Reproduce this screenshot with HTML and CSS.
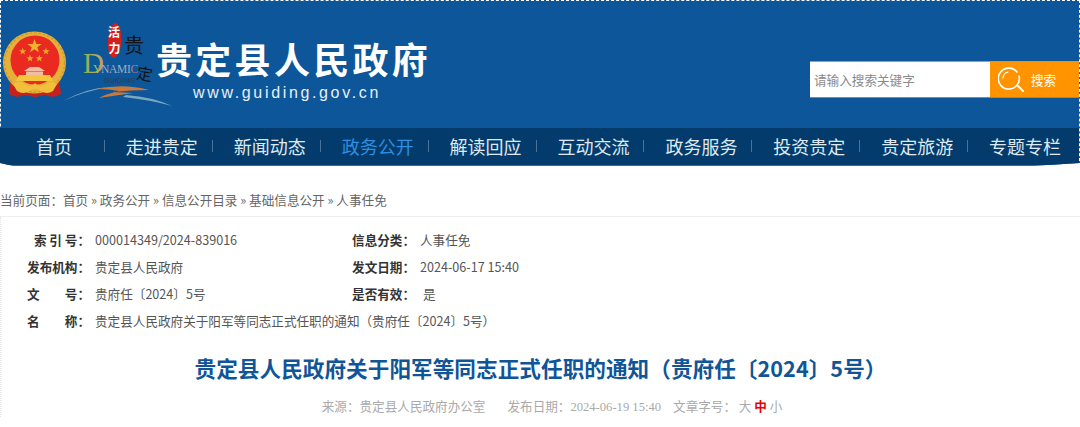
FILE: index.html
```html
<!DOCTYPE html>
<html lang="zh">
<head>
<meta charset="utf-8">
<title>贵定县人民政府</title>
<link rel="stylesheet" href="styles.css">
</head>
<body>
<header class="banner">
  <div class="top">
    <svg class="emblem" viewBox="0 0 64 68" width="64" height="68">
      <path d="M8 47 L6 63 Q13 68 22 64 L32 66 L42 64 Q51 68 58 63 L56 47 Z" fill="#c8201c"/>
      <ellipse cx="31.5" cy="31.5" rx="31.5" ry="31" fill="#e6b13a"/>
      <ellipse cx="31.5" cy="31.5" rx="30" ry="29.5" fill="none" stroke="#cd9a2a" stroke-width="1.4" stroke-dasharray="2.5 2"/>
      <circle cx="32" cy="29" r="24.5" fill="#ea2a20"/>
      <polygon points="31.5,8 33.3,13 38.6,13 34.3,16.2 35.9,21.3 31.5,18.2 27.1,21.3 28.7,16.2 24.4,13 29.7,13" fill="#f2b230"/>
      <polygon points="19.7,16.6 20.6,19.2 23.4,19.2 21.2,20.9 22,23.6 19.7,22 17.4,23.6 18.2,20.9 16,19.2 18.8,19.2" fill="#e8a62c"/>
      <polygon points="43,16.6 43.9,19.2 46.7,19.2 44.5,20.9 45.3,23.6 43,22 40.7,23.6 41.5,20.9 39.3,19.2 42.1,19.2" fill="#e8a62c"/>
      <polygon points="27,23.6 27.9,26.2 30.7,26.2 28.5,27.9 29.3,30.6 27,29 24.7,30.6 25.5,27.9 23.3,26.2 26.1,26.2" fill="#e8a62c"/>
      <polygon points="36.3,23.6 37.2,26.2 40,26.2 37.8,27.9 38.6,30.6 36.3,29 34,30.6 34.8,27.9 32.6,26.2 35.4,26.2" fill="#e8a62c"/>
      <path d="M27 36 H36 L42 40 H21 Z M23 40.5 H40 V44 H23 Z" fill="#f2bda0"/>
      <path d="M16 44 H47 L50 50 H13 Z" fill="#f3c63e"/>
      <path d="M10 53 Q16 49 22 53 Q27 58 32 52 Q37 58 42 53 Q48 49 54 53 L50 60 Q44 64 38 60 Q32 56 26 60 Q20 64 14 60 Z" fill="#f0c03a"/>
    </svg>
    <svg class="slogan" viewBox="0 0 112 90" width="112" height="90">
      <defs>
        <linearGradient id="dGrad" x1="0" x2="1" y1="0" y2="0">
          <stop offset="0" stop-color="#86ad62"/>
          <stop offset=".55" stop-color="#a8b25a"/>
          <stop offset="1" stop-color="#c99a5a"/>
        </linearGradient>
      </defs>
      <path d="M53 3 Q59 3 60 14 Q62 30 54 38 Q48 38 47 28 Q46 10 53 3 Z" fill="#d3201f"/>
      <text class="sl-red" x="47" y="17">活</text>
      <text class="sl-red" x="47.5" y="33">力</text>
      <text class="sl-ink" x="63" y="33">贵</text>
      <text class="sl-ink sl-small" x="76" y="60" transform="rotate(10 84 52)">定</text>
      <text class="sl-d" x="22" y="53" fill="url(#dGrad)">D</text>
      <text class="sl-name" x="32" y="53"><tspan fill="#b4b94a">Y</tspan><tspan fill="#a2aabf">NAMI</tspan><tspan fill="#b97a84">C</tspan></text>
      <text class="sl-guiding" x="43" y="63">GUIDING</text>
      <path d="M2 81 Q26 68 48 67 Q24 71 2 81 Z" fill="#7ba7c0"/>
      <path d="M65 75 Q92 77 111 86 Q90 80 62 77 Z" fill="#7ba7c0"/>
      <path d="M36 69 Q62 63 88 70 Q70 70 52 72 L72 73 L38 78 Q42 75 58 71 Q48 69 36 69 Z" fill="#c9793c"/>
    </svg>
    <div class="brand">
      <div class="brand-name">贵定县人民政府</div>
      <div class="brand-url">www.guiding.gov.cn</div>
    </div>
    <form class="search">
      <span class="search-input">请输入搜索关键字</span>
      <span class="search-btn">
        <svg viewBox="0 0 26 26" width="26" height="26" fill="none" stroke="#fff" stroke-width="1.6" stroke-linecap="round">
          <path d="M19 5 A10.5 10.5 0 1 0 21 9"/>
          <path d="M20 19 L25 24" stroke-width="2"/>
          <path d="M5 11 A6.5 6.5 0 0 1 10 5" stroke-width="1.2"/>
        </svg>
        <span>搜索</span>
      </span>
    </form>
  </div>
  <nav class="nav">
    <a class="nav-item">首页</a>
    <a class="nav-item">走进贵定</a>
    <a class="nav-item">新闻动态</a>
    <a class="nav-item is-active">政务公开</a>
    <a class="nav-item">解读回应</a>
    <a class="nav-item">互动交流</a>
    <a class="nav-item">政务服务</a>
    <a class="nav-item">投资贵定</a>
    <a class="nav-item">贵定旅游</a>
    <a class="nav-item">专题专栏</a>
  </nav>
</header>
<div class="crumbs">当前页面：首页 » 政务公开 » 信息公开目录 » 基础信息公开 » 人事任免</div>
<main class="article">
  <div class="info">
    <div class="info-row">
      <div class="info-cell"><b class="label">索 引 号：</b><span>000014349/2024-839016</span></div>
      <div class="info-cell"><b class="label">信息分类：</b><span>人事任免</span></div>
    </div>
    <div class="info-row">
      <div class="info-cell"><b class="label">发布机构：</b><span>贵定县人民政府</span></div>
      <div class="info-cell"><b class="label">发文日期：</b><span>2024-06-17 15:40</span></div>
    </div>
    <div class="info-row">
      <div class="info-cell"><b class="label label-wide">文 <i>号：</i></b><span>贵府任〔2024〕5号</span></div>
      <div class="info-cell"><b class="label">是否有效：</b><span class="val-pad">是</span></div>
    </div>
    <div class="info-row">
      <div class="info-cell info-full"><b class="label label-wide">名 <i>称：</i></b><span>贵定县人民政府关于阳军等同志正式任职的通知（贵府任〔2024〕5号）</span></div>
    </div>
  </div>
  <h1 class="title">贵定县人民政府关于阳军等同志正式任职的通知（贵府任〔2024〕5号）</h1>
  <div class="meta">
    <span class="meta-source">来源：贵定县人民政府办公室</span>
    <span class="meta-date">发布日期：<span class="serif">2024-06-19 15:40</span></span>
    <span>文章字号： 大 <b class="red">中</b> 小</span>
  </div>
</main>
</body>
</html>
```
FILE: styles.css
```css
* { box-sizing: border-box; }
html, body { margin: 0; padding: 0; height: 427px; overflow: hidden; background: #fff; }
body { font-family: "Noto Sans CJK SC", "Noto Sans", sans-serif; font-size: 12.6px; color: #555; }

.banner { background: #0c5699; border-bottom: 2px solid #2a70b0; height: 166px; border-top: 1px dashed #fff; border-left: 1px dashed #fff; border-right: 1px dashed #fff; clip-path: polygon(0 0, 100% 0, 100% 163px, 1030px 100%, 14px 100%, 0 163px); }
.top { height: 127px; display: flex; align-items: flex-start; }
.emblem { margin: 30px 0 0 2px; flex: none; }
.slogan { margin: 19px 0 0 -6px; flex: none; }
.sl-red { font-size: 12px; font-weight: 700; fill: #fff; font-family: "Noto Sans CJK SC", sans-serif; }
.sl-ink { font-size: 20px; fill: #141414; font-family: "Noto Sans CJK SC", sans-serif; }
.sl-small { font-size: 16px; }
.sl-d { font-size: 29px; font-family: "Liberation Serif", serif; }
.sl-name { font-size: 11.5px; letter-spacing: -.3px; font-family: "Liberation Serif", serif; }
.sl-guiding { font-size: 7px; fill: #2b3f55; font-family: "Liberation Sans", sans-serif; letter-spacing: .2px; }

.brand { margin: 35px 0 0 -17px; color: #fff; flex: none; width: 300px; }
.brand-name { font-size: 36px; font-weight: 700; letter-spacing: 3.3px; line-height: 44px; }
.brand-url { margin: 3px 0 0 37px; font-size: 16px; letter-spacing: 2.65px; line-height: 20px; font-family: "Liberation Sans", sans-serif; color: #e8f0f8; }

.search { margin: 60px 0 0 auto; display: flex; height: 37px; width: 269px; border-top: 1px solid #7ea6cd; border-bottom: 1px solid #5d8fc0; }
.search-input { width: 180px; background: #fff; color: #8a8a8a; font-size: 12.6px; line-height: 35px; padding-left: 4px; }
.search-btn { width: 89px; background: #ff9400; display: flex; align-items: center; color: #fff; font-size: 12.6px; padding-left: 8px; gap: 7px; }

.nav { height: 37px; background: #033c6c; display: flex; align-items: flex-start; margin-left: -1px; }
.nav-item { width: 108px; text-align: center; color: #dfe9f2; font-size: 18px; line-height: 36px; background: linear-gradient(#4a7397, #4a7397) no-repeat right 3px top 12px / 1px 12px; }
.nav-item:last-child { background: none; }
.is-active { color: #2e8fe0; }

.crumbs { height: 51px; padding-top: 25px; line-height: 18px; color: #666; border-bottom: 1px solid #eee; }
.article { border-left: 1px dotted #e4e4e4; }
.info { padding: 9px 0 0 26px; }
.info-row { display: flex; height: 27px; line-height: 27px; color: #555; }
.info-cell { width: 325px; display: flex; }
.info-full { width: auto; }
.label { width: 63px; text-align: right; color: #333; font-weight: 700; flex: none; white-space: pre; margin-right: 5px; }
.label-wide { text-align: left; display: flex; justify-content: space-between; }
.label-wide i { font-style: normal; padding-right: 0; }
.val-pad { padding-left: 3px; }

.title { margin: 19px 0 0; text-align: center; color: #0f5598; font-size: 21.6px; letter-spacing: .06px; font-weight: 700; line-height: 30px; }
.meta { margin-top: 13px; display: flex; justify-content: center; color: #aaa; line-height: 20px; padding-left: 23px; }
.meta-source { margin-right: 22px; }
.meta-date { margin-right: 12px; }
.serif { font-family: "Liberation Serif", serif; }
.red { color: #e60000; }
```
